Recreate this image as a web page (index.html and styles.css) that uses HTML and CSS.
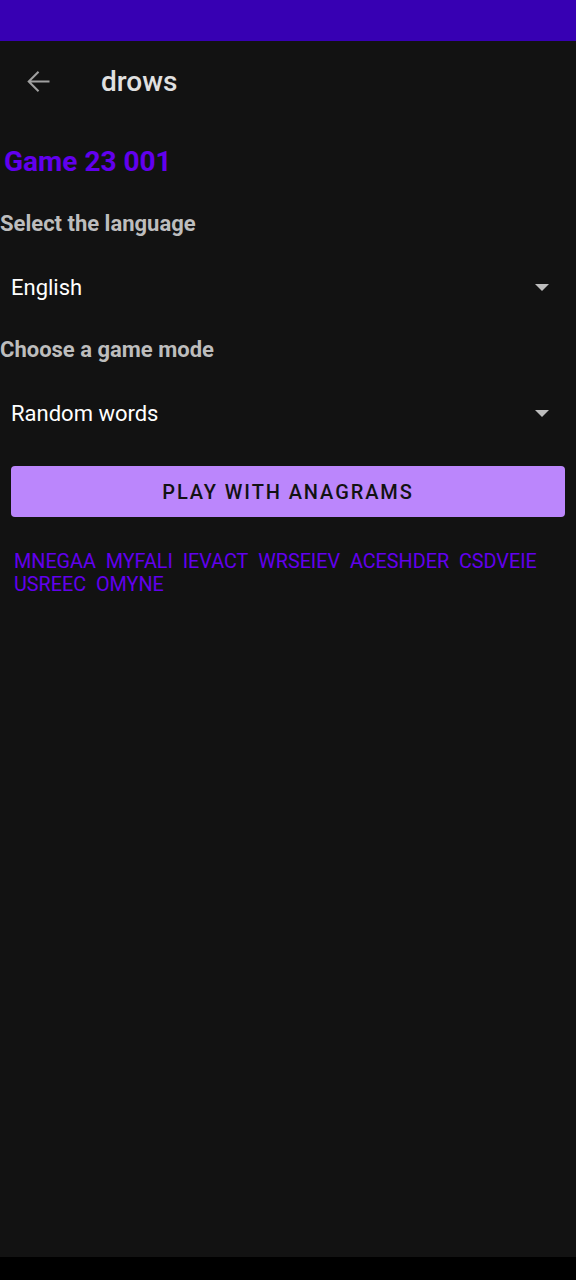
FILE: index.html
```html
<!DOCTYPE html>
<html lang="en">
<head>
    <meta charset="UTF-8">
    <title>drows</title>
    <link rel="stylesheet" href="styles.css">
</head>
<body>
<div class="status"></div>
<div class="appbar">
    <svg class="back" width="33" height="33" viewBox="0 0 24 24">
        <path d="M20 11.25H6.7l5.85-5.85-1.05-1.05L3.85 12l7.65 7.65 1.05-1.05-5.85-5.85H20z" fill="#a0a0a0"/>
    </svg>
    <span class="title">drows</span>
</div>
<div class="content">
    <h1 class="game">Game 23 001</h1>
    <div class="label">Select the language</div>
    <div class="spinner">
        <span>English</span>
        <span class="caret"></span>
    </div>
    <div class="label">Choose a game mode</div>
    <div class="spinner">
        <span>Random words</span>
        <span class="caret"></span>
    </div>
    <div class="btnwrap">
        <div class="btn">PLAY WITH ANAGRAMS</div>
    </div>
    <div class="words">MNEGAA&nbsp; MYFALI&nbsp; IEVACT&nbsp; WRSEIEV&nbsp; ACESHDER&nbsp; CSDVEIE&nbsp; USREEC&nbsp; OMYNE</div>
</div>
<div class="navbar"></div>
</body>
</html>
```

FILE: styles.css
```css
* {
    box-sizing: border-box;
}

html, body {
    margin: 0;
    padding: 0;
}

body {
    width: 576px;
    height: 1280px;
    background: #121212;
    font-family: Roboto, "Noto Sans", sans-serif;
    display: flex;
    flex-direction: column;
}

.status {
    height: 41px;
    background: #3700b3;
    flex: none;
}

.appbar {
    height: 81px;
    display: flex;
    align-items: center;
    flex: none;
}

.back {
    margin-left: 22px;
}

.title {
    margin-left: 46px;
    font-size: 28px;
    font-weight: 500;
    color: #e0e0e0;
}

.content {
    flex: 1;
}

.game {
    margin: 0;
    padding: 20px 0 0 4px;
    font-size: 28px;
    line-height: 40px;
    font-weight: 700;
    color: #6200ee;
}

.label {
    margin-top: 29px;
    font-size: 22px;
    line-height: 26px;
    font-weight: 700;
    color: #bdbdbd;
}

.spinner {
    height: 64px;
    margin-top: 18px;
    display: flex;
    align-items: center;
    justify-content: space-between;
    padding: 0 27px 0 11px;
    font-size: 22px;
    color: #ffffff;
}

.spinner + .label {
    margin-top: 18px;
}

.caret {
    width: 0;
    height: 0;
    border-left: 7px solid transparent;
    border-right: 7px solid transparent;
    border-top: 7px solid #bdbdbd;
}

.btnwrap {
    padding: 21px 11px 0 11px;
}

.btn {
    height: 51px;
    background: #bb86fc;
    border-radius: 4px;
    display: flex;
    align-items: center;
    justify-content: center;
    font-size: 20px;
    font-weight: 500;
    letter-spacing: 1.9px;
    color: #121212;
}

.words {
    padding: 33px 20px 0 14px;
    font-size: 19.8px;
    line-height: 23px;
    color: #6200ee;
}

.navbar {
    height: 23px;
    background: #000000;
    flex: none;
}
```
